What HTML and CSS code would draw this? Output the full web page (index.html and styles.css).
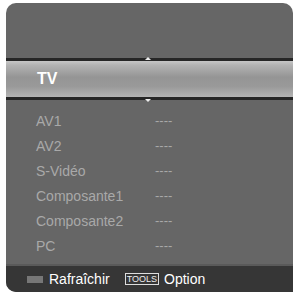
FILE: index.html
```html
<!DOCTYPE html>
<html>
<head>
<meta charset="utf-8">
<link rel="stylesheet" href="styles.css">
</head>
<body>
<div class="panel">
  <div class="top"></div>
  <div class="sel-wrap">
    <span class="arrow up"></span>
    <div class="sel">TV</div>
    <span class="arrow down"></span>
  </div>
  <ul class="list">
    <li><span class="name">AV1</span><span class="val">----</span></li>
    <li><span class="name">AV2</span><span class="val">----</span></li>
    <li><span class="name">S-Vidéo</span><span class="val">----</span></li>
    <li><span class="name">Composante1</span><span class="val">----</span></li>
    <li><span class="name">Composante2</span><span class="val">----</span></li>
    <li><span class="name">PC</span><span class="val">----</span></li>
  </ul>
  <div class="foot">
    <span class="key"></span><span class="lbl">Rafraîchir</span>
    <span class="tools">TOOLS</span><span class="lbl">Option</span>
  </div>
</div>
</body>
</html>
```
FILE: styles.css
```css
html, body { margin: 0; padding: 0; background: #fff; }
body { width: 295px; height: 292px; overflow: hidden; font-family: "Liberation Sans", Arial, sans-serif; }
.panel {
  margin: 3px 2px 0 6px;
  height: 289px;
  background: #666;
  border-radius: 10px 10px 0 10px;
  display: flex;
  flex-direction: column;
  overflow: hidden;
}
.top { height: 55px; }
.sel-wrap { position: relative; }
.sel {
  height: 36px;
  border-top: 3px solid #262626;
  border-bottom: 3px solid #262626;
  background: linear-gradient(#c6c6c6 0%, #b2b2b2 12%, #959595 45%, #999 70%, #b4b4b4 100%);
  color: #fff;
  font-weight: bold;
  font-size: 16px;
  line-height: 36px;
  padding-left: 31px;
}
.arrow { position: absolute; left: 139px; width: 0; height: 0; border-left: 3px solid transparent; border-right: 3px solid transparent; }
.arrow.up { top: -1px; border-bottom: 3px solid #eee; }
.arrow.down { bottom: -2px; border-top: 3px solid #eee; }
.list { list-style: none; margin: 0; padding: 8px 0 0 0; flex: 1; }
.list li { height: 25px; display: flex; align-items: center; font-size: 14px; color: #a9a9a9; }
.name { width: 119px; padding-left: 30px; }
.val { font-size: 13px; }
.foot {
  height: 26px;
  background: #363636;
  border-top: 2px solid #5a5a5a;
  display: flex;
  align-items: center;
  padding-left: 21px;
  color: #fff;
  font-size: 14px;
}
.key { width: 16px; height: 7px; background: #777; margin-right: 6px; }
.lbl { margin-right: 15px; }
.tools { font-size: 9px; border: 1px solid #ddd; padding: 0 1px; line-height: 10px; margin-right: 5px; color: #eee; }
```
